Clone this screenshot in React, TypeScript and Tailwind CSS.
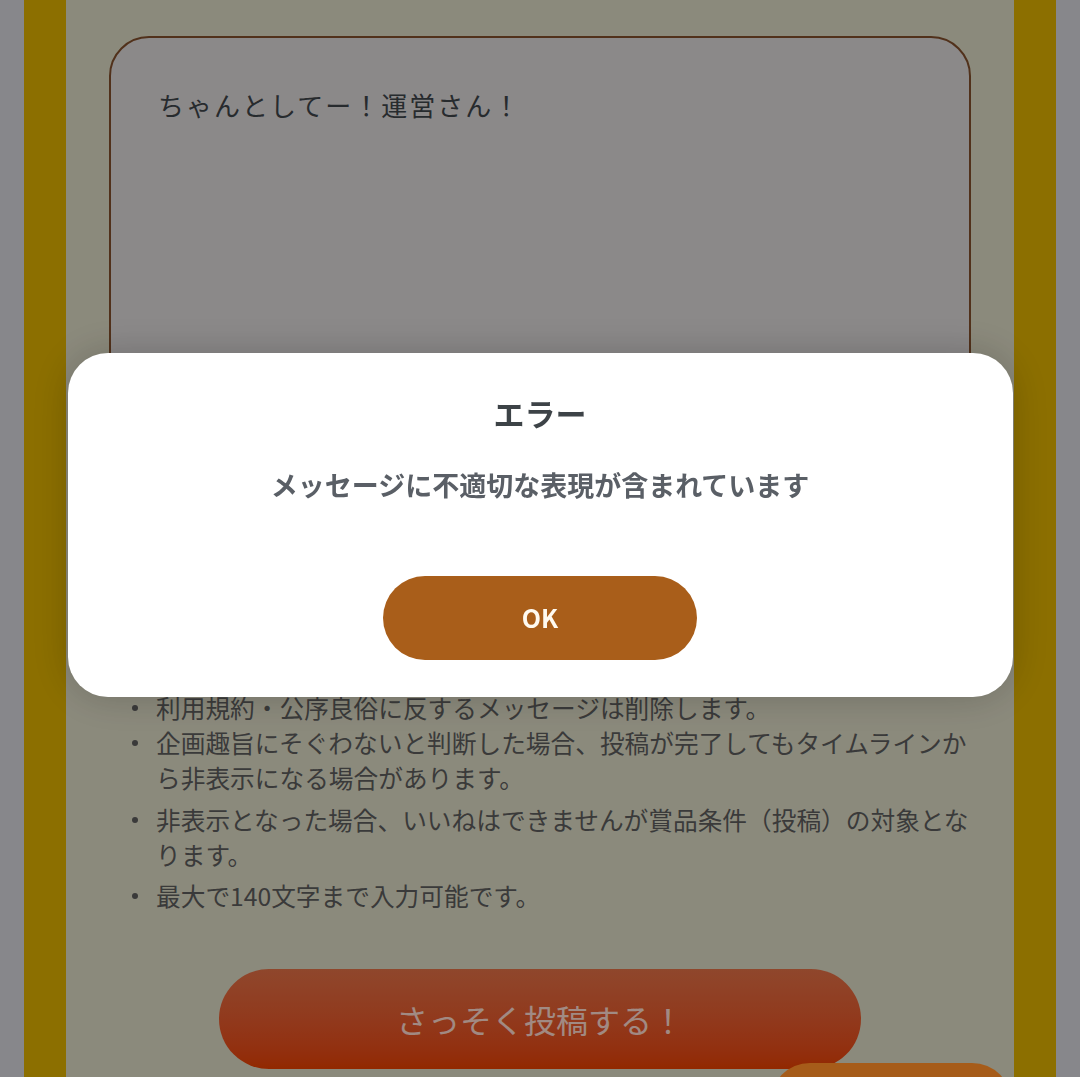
const notes = [
  '利用規約・公序良俗に反するメッセージは削除します。',
  '企画趣旨にそぐわないと判断した場合、投稿が完了してもタイムラインから非表示になる場合があります。',
  '非表示となった場合、いいねはできませんが賞品条件（投稿）の対象となります。',
  '最大で140文字まで入力可能です。',
];

const noteGap = ['', '', 'mt-[7px]', 'mt-[6px]'];

function ErrorDialog() {
  return (
    <div className="fixed inset-0 z-20 flex items-start justify-center bg-black/35">
      <div className="mt-[353px] flex w-[945px] flex-col items-center rounded-[40px] bg-white pt-[37px] pb-[37px] shadow-[0_0_40px_rgba(0,0,0,0.2)]">
        <h2 className="text-[31px] font-bold leading-[46px] text-[#3d4347]">エラー</h2>
        <p className="mt-[29px] text-[27px] font-bold leading-[40px] text-[#5a5f66]">
          メッセージに不適切な表現が含まれています
        </p>
        <button className="mt-[71px] h-[84px] w-[314px] rounded-full bg-[#a95e1a] text-[25px] font-bold text-[#fffaf0]">
          OK
        </button>
      </div>
    </div>
  );
}

export default function App() {
  return (
    <div className="min-h-screen bg-[#d0d0d6] font-['Noto_Sans_CJK_JP','Noto_Sans',sans-serif]">
      <div className="mx-[24px] border-x-[42px] border-[#d7ab00] bg-[#d6d4bf] px-[43px] pt-[36px] pb-[160px]">
        <div className="h-[600px] rounded-[40px] border-2 border-[#7d4c2a] bg-[#d6d3d3] px-[47px] pt-[47px] text-[26px] leading-[39px] tracking-[2px] text-[#3c4247]">
          ちゃんとしてー！運営さん！
        </div>

        <ul className="mt-[54px] text-[24.7px] leading-[35px] text-[#5a5a5a]">
          {notes.map((n, i) => (
            <li key={i} className={`flex ${noteGap[i]}`}>
              <span className="flex h-[35px] w-[47px] shrink-0 items-center pl-[23px]">
                <span className="h-[6px] w-[6px] rounded-full bg-[#5a5a5a]" />
              </span>
              <span>{n}</span>
            </li>
          ))}
        </ul>

        <div className="mt-[56px] flex justify-center">
          <button className="h-[100px] w-[642px] rounded-full bg-gradient-to-b from-[#dc6d44] to-[#e13f00] text-[32px] text-white/75">
            さっそく投稿する！
          </button>
        </div>
      </div>

      <div className="fixed top-[1063px] right-[68px] z-10 h-[80px] w-[242px] rounded-[40px] bg-[#ff8e28]" />

      <ErrorDialog />
    </div>
  );
}
